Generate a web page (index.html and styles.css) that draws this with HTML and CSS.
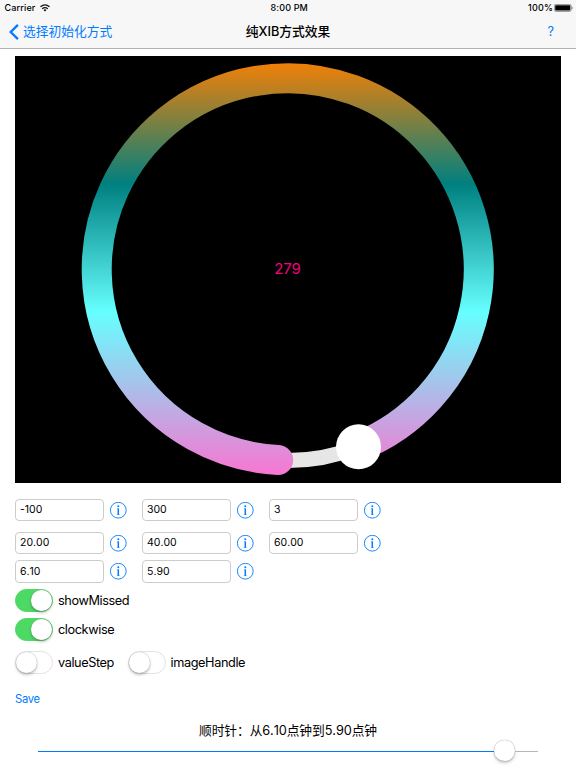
FILE: index.html
```html
<!DOCTYPE html>
<html lang="zh-CN">
<head>
<meta charset="utf-8">
<title>纯XIB方式效果</title>
<link rel="stylesheet" href="styles.css">
</head>
<body>
<svg class="defs" aria-hidden="true">
  <symbol id="info" viewBox="0 0 17 17">
    <circle cx="8.3" cy="8.2" r="7.9" fill="none" stroke="currentColor" stroke-width=".9"/>
    <circle cx="8.3" cy="4.3" r="1" fill="currentColor"/>
    <path d="M7 6.7h1.4M6.9 12.5h2.8" fill="none" stroke="currentColor" stroke-width="0.5"/>
    <path d="M8.3 6.4v6.4" stroke="currentColor" stroke-width="1.5"/>
  </symbol>
</svg>
<header class="top">
  <div class="status">
    <div class="carrier"><span>Carrier</span>
      <svg width="10" height="8" viewBox="0 0 10 8" fill="none" stroke="#111" stroke-width="1.3"><path d="M.5 2.8Q5-1 9.5 2.8M2.2 4.7Q5 2.4 7.8 4.7"/><path d="M3.5 5.9Q5 4.8 6.5 5.9L5 7.5Z" fill="#111" stroke="none"/></svg>
    </div>
    <span class="time">8:00 PM</span>
    <div class="power"><span>100%</span>
      <svg width="19" height="8" viewBox="0 0 19 8"><rect x=".4" y=".4" width="16.7" height="7" rx="1.7" fill="#fff" stroke="#777" stroke-width=".8"/><rect x="1.2" y="1.2" width="15.1" height="5.4" rx=".8" fill="#000"/><path d="M17.8 2.5q1.6 1.4 0 2.8z" fill="#555"/></svg>
    </div>
  </div>
  <nav class="nav">
    <a class="back"><svg width="10" height="16" viewBox="0 0 10 16"><path d="M8.9.9 1.7 8l7.2 7.1" fill="none" stroke="currentColor" stroke-width="2.3"/></svg><span>选择初始化方式</span></a>
    <h1>纯XIB方式效果</h1>
    <a class="help">?</a>
  </nav>
</header>
<main>
  <svg class="dial" width="546" height="427" viewBox="15 56 546 427">
    <defs>
      <linearGradient id="ring" gradientUnits="userSpaceOnUse" x1="0" y1="56" x2="0" y2="483">
        <stop offset="0" stop-color="#ff8000"/><stop offset=".3" stop-color="#008080"/><stop offset=".6" stop-color="#66ffff"/><stop offset="1" stop-color="#ff6fcf"/>
      </linearGradient>
    </defs>
    <path d="M278 460.2A191 191 0 0 0 358.4 447" fill="none" stroke="#e6e6e6" stroke-width="15"/>
    <path d="M278.2 460A191 191 0 1 1 358.6 446.6" fill="none" stroke="url(#ring)" stroke-width="30" stroke-linecap="round"/>
    <circle cx="358.5" cy="446.8" r="22.5" fill="#fff"/>
    <text x="287.5" y="274.3" text-anchor="middle" class="value">279</text>
  </svg>
  <section class="fields">
    <div class="row"><input value="-100"><svg><use href="#info"/></svg><input value="300"><svg><use href="#info"/></svg><input value="3"><svg><use href="#info"/></svg></div>
    <div class="row second"><input value="20.00"><svg><use href="#info"/></svg><input value="40.00"><svg><use href="#info"/></svg><input value="60.00"><svg><use href="#info"/></svg></div>
    <div class="row third"><input value="6.10"><svg><use href="#info"/></svg><input value="5.90"><svg><use href="#info"/></svg></div>
  </section>
  <section class="switches">
    <div class="option"><i class="switch on"></i><span>showMissed</span></div>
    <div class="option"><i class="switch on"></i><span>clockwise</span></div>
    <div class="pair">
      <div class="option"><i class="switch"></i><span>valueStep</span></div>
      <div class="option"><i class="switch"></i><span>imageHandle</span></div>
    </div>
  </section>
  <a class="save">Save</a>
  <p class="summary">顺时针：从6.10点钟到5.90点钟</p>
  <div class="slider"><div class="filled"></div><div class="thumb"></div><div class="rest"></div></div>
</main>
</body>
</html>
```
FILE: styles.css
```css
* { box-sizing: border-box; }
body {
  margin: 0;
  width: 576px;
  height: 768px;
  overflow: hidden;
  background: #fff;
  color: #000;
  font: 12.75px/16px Inter, "Noto Sans CJK SC", sans-serif;
}
svg { display: block; flex: none; }
.defs { position: absolute; width: 0; height: 0; }
.top { height: 49px; background: #f7f7f7; border-bottom: 1px solid #b2b2b2; }
.status, .nav { display: grid; grid-template-columns: 1fr auto 1fr; align-items: center; }
.status { height: 15px; padding: 0 4px 0 4.5px; font-size: 9px; font-weight: 500; letter-spacing: .15px; }
.carrier, .power { display: flex; align-items: center; gap: 4px; }
.power { justify-content: flex-end; gap: 1px; margin-right: -1px; }
.time { padding-left: 2px; }
.nav { height: 33px; padding: 0 22px 0 9px; color: #007aff; }
.nav h1 { margin: 0 0 0 13px; font-size: 12.75px; line-height: 16px; font-weight: 500; color: #000; }
.back { display: flex; align-items: center; gap: 4px; }
.help { text-align: right; }
.dial { margin: 7px 0 0 15px; background: #000; }
.value { fill: #f0047f; font-size: 15px; letter-spacing: -.1px; }
.fields { padding: 16px 0 0 15px; }
.row { display: flex; align-items: center; height: 22px; }
.second { margin-top: 11px; }
.third { margin-top: 6px; height: 23px; }
.row input {
  width: 89px;
  height: 100%;
  padding: 0 4px 1px;
  border: 1px solid #ccc;
  border-radius: 4px;
  background: #fff;
  color: #000;
  font: 10.5px Inter, sans-serif;
  font-kerning: none;
}
.row svg { width: 17px; height: 17px; margin: 0 15px 0 6px; color: #007aff; }
.switches { padding: 6px 0 0 15px; }
.option { display: flex; align-items: center; gap: 5px; height: 23px; margin-bottom: 6px; letter-spacing: -.42px; }
.pair { display: flex; gap: 13.5px; margin-top: 10px; }
.switch { display: flex; flex: none; width: 38px; height: 23px; border: 1px solid #e2e2e2; border-radius: 12px; }
.switch::after { content: ""; width: 21px; height: 21px; border-radius: 50%; background: #fff; box-shadow: 0 0 1px #999, 0 2px 3px rgba(0,0,0,.25); }
.switch.on { justify-content: flex-end; background: #4cd964; border-color: #4cd964; }
.save { display: block; width: max-content; margin: 11px 0 0 15px; font-size: 11.25px; letter-spacing: -.3px; color: #007aff; }
.summary { margin: 16px 0 0; text-align: center; letter-spacing: -.1px; font-kerning: none; }
.slider { display: flex; align-items: center; width: 500px; height: 22px; margin: 0 0 0 38px; }
.filled { width: 456px; height: 1px; margin-top: 2px; background: #007aff; }
.rest { flex: 1; height: 1px; margin-top: 2px; background: #b6b6b6; }
.thumb { width: 21px; height: 21px; border-radius: 50%; background: #fff; box-shadow: 0 0 1px #888, 0 2px 3px rgba(0,0,0,.25); }
```
